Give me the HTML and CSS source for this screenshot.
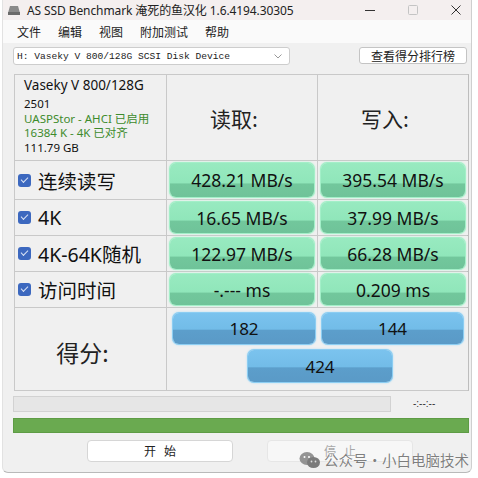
FILE: index.html
```html
<!DOCTYPE html>
<html lang="zh">
<head>
<meta charset="utf-8">
<link rel="stylesheet" href="styles.css">
</head>
<body>
<div class="window">
  <div class="titlebar">
    <svg class="appicon" width="12" height="10" viewBox="0 0 12 10"><path d="M2 1h8l2 7H0z" fill="#8a8a8a"/><rect x="0" y="7" width="12" height="3" fill="#6a6a6a"/></svg>
    <span class="title">AS SSD Benchmark 淹死的鱼汉化 1.6.4194.30305</span>
    <div class="controls">
      <svg width="12" height="12" viewBox="0 0 12 12"><path d="M1 6.5h10" stroke="#333" stroke-width="1"/></svg>
      <svg width="12" height="12" viewBox="0 0 12 12"><rect x="1.5" y="1.5" width="9" height="9" rx="1" fill="none" stroke="#c4c4c4"/></svg>
      <svg width="12" height="12" viewBox="0 0 12 12"><path d="M1.5 1.5l9 9M10.5 1.5l-9 9" stroke="#333" stroke-width="1"/></svg>
    </div>
  </div>
  <div class="menubar">
    <span>文件</span><span>编辑</span><span>视图</span><span>附加测试</span><span>帮助</span>
  </div>
  <div class="toolbar">
    <div class="select">
      <span class="select-text">H: Vaseky V 800/128G SCSI Disk Device</span>
      <svg width="8" height="5" viewBox="0 0 8 5"><path d="M0.5 0.5l3.5 3.5 3.5-3.5" fill="none" stroke="#999"/></svg>
    </div>
    <div class="btn-rank">查看得分排行榜</div>
  </div>

  <div class="grid">
    <div class="cell info">
      <div class="info-name">Vaseky V 800/128G</div>
      <div class="info-line">2501</div>
      <div class="info-line ok">UASPStor - AHCI 已启用</div>
      <div class="info-line ok">16384 K - 4K 已对齐</div>
      <div class="info-line">111.79 GB</div>
    </div>
    <div class="cell head">读取:</div>
    <div class="cell head">写入:</div>

    <div class="cell label"><span class="check"></span>连续读写</div>
    <div class="cell val"><div class="pill green">428.21 MB/s</div></div>
    <div class="cell val"><div class="pill green">395.54 MB/s</div></div>

    <div class="cell label"><span class="check"></span>4K</div>
    <div class="cell val"><div class="pill green">16.65 MB/s</div></div>
    <div class="cell val"><div class="pill green">37.99 MB/s</div></div>

    <div class="cell label"><span class="check"></span>4K-64K随机</div>
    <div class="cell val"><div class="pill green">122.97 MB/s</div></div>
    <div class="cell val"><div class="pill green">66.28 MB/s</div></div>

    <div class="cell label"><span class="check"></span>访问时间</div>
    <div class="cell val"><div class="pill green">-.--- ms</div></div>
    <div class="cell val"><div class="pill green">0.209 ms</div></div>

    <div class="cell score-label">得分:</div>
    <div class="cell scores">
      <div class="pill blue">182</div>
      <div class="pill blue">144</div>
      <div class="pill blue total">424</div>
    </div>
  </div>

  <div class="progress-row">
    <div class="progress"></div>
    <span class="eta">-:--:--</span>
  </div>
  <div class="greenbar"></div>
  <div class="actions">
    <div class="btn">开&nbsp;&nbsp;&nbsp;始</div>
    <div class="btn disabled">停&nbsp;&nbsp;&nbsp;止</div>
  </div>

  <div class="watermark">
    <svg width="22" height="18" viewBox="0 0 22 18"><ellipse cx="8" cy="7.5" rx="7.5" ry="6.5" fill="#8a8a8a"/><ellipse cx="14.5" cy="11.5" rx="6.5" ry="5.5" fill="#6e6e6e"/><circle cx="5.5" cy="6" r="1" fill="#fff"/><circle cx="10" cy="6" r="1" fill="#fff"/><circle cx="12.5" cy="10.5" r="0.9" fill="#ddd"/><circle cx="16.5" cy="10.5" r="0.9" fill="#ddd"/></svg>
    <span>公众号·小白电脑技术</span>
  </div>
</div>
</body>
</html>
```

FILE: styles.css
```css
* { box-sizing: border-box; }
html, body { margin: 0; padding: 0; }
body {
  width: 478px;
  height: 478px;
  background: #ffffff;
  font-family: "Noto Sans", "Noto Sans CJK SC", sans-serif;
  color: #111;
  overflow: hidden;
  padding-left: 2px;
}
.window {
  position: relative;
  width: 470px;
  height: 473px;
  background: #f0f0f0;
  border-left: 1px solid #e2e2e2;
  border-right: 1px solid #cfcfcf;
  border-bottom: 1px solid #b9b9b9;
  border-radius: 0 0 6px 6px;
  display: flex;
  flex-direction: column;
}
.titlebar {
  height: 20px;
  background: #f4efef;
  display: flex;
  align-items: center;
  padding-left: 5px;
}
.appicon { margin-right: 7px; }
.title {
  font-size: 12px;
  color: #222;
  font-family: "Noto Sans", "Noto Sans CJK SC", sans-serif;
  letter-spacing: -0.1px;
}
.controls {
  margin-left: auto;
  display: flex;
  gap: 31px;
  padding-right: 9px;
}
.menubar {
  height: 23px;
  background: #fafafa;
  display: flex;
  align-items: center;
  gap: 17px;
  padding-left: 14px;
  font-size: 12px;
  color: #222;
  font-family: "Noto Sans CJK SC", sans-serif;
}
.toolbar {
  height: 31px;
  display: flex;
  align-items: flex-start;
  padding: 4px 0 0 10px;
}
.select {
  width: 277px;
  height: 18px;
  background: #fff;
  border: 1px solid #cdcdcd;
  border-radius: 3px;
  display: flex;
  align-items: center;
  justify-content: space-between;
  padding: 0 7px 0 3px;
}
.select-text {
  font-family: "Liberation Mono", monospace;
  font-size: 9.6px;
  color: #222;
  white-space: nowrap;
}
.btn-rank {
  margin-left: 69px;
  width: 108px;
  height: 17px;
  background: #fff;
  border: 1px solid #c4c4c4;
  border-radius: 3px;
  font-size: 12px;
  line-height: 15px;
  text-align: center;
  font-family: "Noto Sans CJK SC", sans-serif;
  color: #222;
}
.grid {
  margin-left: 11px;
  width: 455px;
  display: grid;
  grid-template-columns: 151px 150px 150px;
  grid-template-rows: 85px 38px 35px 35px 35px 82px;
  gap: 1px;
  background: #c9c9c9;
  border: 1px solid #c9c9c9;
  border-right: 2px solid #bdbdbd;
}
.cell { background: #f0f0f0; }
.info { padding: 2px 0 0 9px; }
.info-name {
  font-size: 13.5px;
  line-height: 17px;
  margin-bottom: 3px;
  color: #111;
}
.info-line {
  font-size: 11.5px;
  line-height: 14.5px;
  color: #111;
  font-family: "Noto Sans", "Noto Sans CJK SC", sans-serif;
}
.info-line.ok { color: #3d8b2c; }
.head {
  display: flex;
  align-items: center;
  justify-content: center;
  font-size: 21px;
  font-family: "Noto Sans CJK SC", sans-serif;
  color: #222;
  padding-right: 16px;
}
.label {
  display: flex;
  align-items: center;
  padding-left: 3px;
  font-size: 19.5px;
  font-family: "Noto Sans", "Noto Sans CJK SC", sans-serif;
  color: #111;
}
.check {
  width: 13px;
  height: 13px;
  border-radius: 3px;
  background: #3c68bf;
  margin-right: 7px;
  position: relative;
  flex: none;
}
.check::after {
  content: "";
  position: absolute;
  left: 3px;
  top: 3px;
  width: 6px;
  height: 3px;
  border-left: 1.3px solid #d9e3f5;
  border-bottom: 1.3px solid #d9e3f5;
  transform: rotate(-45deg);
}
.val { padding: 2px 3px; display: flex; }
.pill {
  flex: 1;
  display: flex;
  align-items: center;
  justify-content: center;
  font-size: 17.5px;
  color: #111;
  border-radius: 6px;
  font-family: "Noto Sans", sans-serif;
}
.green {
  background: linear-gradient(to bottom, #98eac0 0%, #90e6ba 58%, #72c79c 62%, #6fc399 100%);
  box-shadow: 0 0 0 1px #a3efc8, 0 0 2px 1px #b5f3d3;
}
.blue {
  background: linear-gradient(to bottom, #7bc3ee 0%, #72bce8 52%, #5c9ecb 56%, #5a9ac7 100%);
  box-shadow: 0 0 0 1px #8ccdf2, 0 0 2px 1px #a6dbf7;
  font-size: 17px;
}
.score-label {
  display: flex;
  align-items: center;
  justify-content: center;
  font-size: 23px;
  font-family: "Noto Sans CJK SC", sans-serif;
  color: #222;
  padding-top: 6px;
  padding-right: 16px;
}
.scores {
  grid-column: 2 / 4;
  display: grid;
  grid-template-columns: 142px 141px;
  grid-template-rows: 31px 32px;
  column-gap: 7px;
  row-gap: 6px;
  padding: 5px 0 0 6px;
}
.scores .total {
  grid-column: 1 / 3;
  width: 144px;
  justify-self: center;
  margin-left: 4px;
}
.progress-row {
  display: flex;
  align-items: center;
  margin-top: 4px;
  padding-left: 10px;
  height: 17px;
}
.progress {
  width: 378px;
  height: 16px;
  background: #e6e6e6;
  border: 1px solid #d2d2d2;
}
.eta {
  margin-left: 22px;
  font-size: 10px;
  color: #333;
  font-family: "Liberation Sans", sans-serif;
}
.greenbar {
  margin: 6px 0 0 10px;
  width: 456px;
  height: 15px;
  background: #6aaa50;
  border: 1px solid #5e9c45;
}
.actions {
  display: flex;
  gap: 34px;
  margin: 7px 0 0 84px;
}
.btn {
  width: 146px;
  height: 22px;
  background: #fff;
  border: 1px solid #d6d6d6;
  border-radius: 4px;
  font-size: 12px;
  line-height: 20px;
  text-align: center;
  font-family: "Noto Sans CJK SC", sans-serif;
  color: #222;
}
.btn.disabled {
  background: #f7f7f7;
  border-color: #e6e6e6;
  color: #a8a8a8;
}
.watermark {
  position: absolute;
  left: 296px;
  top: 449px;
  display: flex;
  align-items: center;
  gap: 3px;
  font-size: 14.5px;
  white-space: nowrap;
  font-family: "Noto Sans CJK SC", sans-serif;
  color: rgba(70, 70, 70, 0.75);
  text-shadow: 0 0 2px #fff;
  opacity: 0.9;
}
```
